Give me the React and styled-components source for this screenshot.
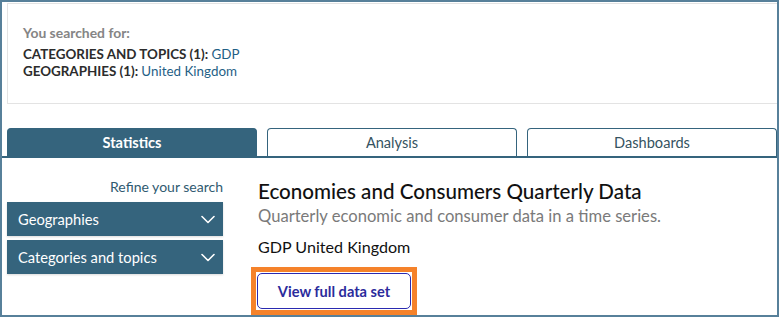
import React from 'react';
import styled, { createGlobalStyle } from 'styled-components';

const GlobalStyle = createGlobalStyle`
  html, body {
    margin: 0;
    padding: 0;
    background: #ffffff;
  }
  body {
    font-family: Lato, "Open Sans", Arial, sans-serif;
  }
  * {
    box-sizing: border-box;
  }
`;

const Frame = styled.div`
  width: 779px;
  height: 317px;
  border: 2px solid #57809a;
  overflow: hidden;
  background: #fff;
`;

const SearchPanel = styled.div`
  margin: 1px 0 0 5px;
  height: 101px;
  border: 1px solid #e3e3e3;
  border-right: none;
  padding: 20px 0 0 15px;
  font-size: 13.4px;
  line-height: 17px;
`;

const SearchLabel = styled.div`
  color: #858585;
  font-weight: 700;
  font-size: 13.9px;
  margin-bottom: 5px;
`;

const SearchLine = styled.div`
  color: #2c2c2c;
  font-weight: 700;
`;

const SearchValue = styled.span`
  color: #1f5f86;
  font-weight: 400;
`;

const TabRow = styled.div`
  display: flex;
  gap: 10px;
  margin-top: 24px;
  padding-left: 5px;
  border-bottom: 2px solid #35647d;
`;

const Tab = styled.div`
  width: 250px;
  height: 28px;
  display: flex;
  align-items: center;
  justify-content: center;
  border: 1.5px solid #35647d;
  border-bottom: none;
  border-radius: 4px 4px 0 0;
  font-size: 14.6px;
  font-weight: ${p => (p.$active ? 700 : 400)};
  color: ${p => (p.$active ? '#ffffff' : '#35535f')};
  background: ${p => (p.$active ? '#35647d' : '#ffffff')};
`;

const Body = styled.div`
  display: flex;
  gap: 35px;
  padding-left: 5px;
`;

const Sidebar = styled.div`
  width: 216px;
  display: flex;
  flex-direction: column;
  gap: 4px;
  padding-top: 20px;
`;

const Refine = styled.div`
  text-align: right;
  color: #2f5a70;
  font-size: 14px;
  line-height: 18px;
  margin-bottom: 2px;
`;

const Accordion = styled.div`
  height: 34px;
  background: #35647d;
  color: #fff;
  display: flex;
  align-items: center;
  justify-content: space-between;
  padding: 0 8px 0 11px;
  font-size: 14.7px;
  box-shadow: 0 1px 2px rgba(0, 0, 0, 0.15);
`;

const Main = styled.div`
  padding-top: 22px;
`;

const Title = styled.h2`
  margin: 0;
  font-size: 20.6px;
  line-height: 22px;
  font-weight: 500;
  color: #111;
`;

const Subtitle = styled.p`
  margin: 4px 0 0;
  font-size: 16.6px;
  line-height: 20px;
  color: #7a7a7a;
`;

const Dataset = styled.p`
  margin: 11px 0 0;
  font-size: 16.1px;
  line-height: 20px;
  color: #111;
`;

const Highlight = styled.div`
  display: inline-block;
  margin: 10px 0 0 -7px;
  border: 5px solid #f5822a;
  padding: 1px;
`;

const Button = styled.button`
  width: 154px;
  height: 36px;
  border: 1.5px solid #2a2ab0;
  border-radius: 5px;
  background: #fff;
  color: #2b2b9c;
  font-family: inherit;
  font-size: 14.6px;
  font-weight: 700;
  cursor: pointer;
`;

const Chevron = () => (
  <svg width="14" height="9" viewBox="0 0 14 9" fill="none">
    <path d="M1 1.5l6 6 6-6" stroke="#fff" strokeWidth="1.6" strokeLinecap="round" strokeLinejoin="round" />
  </svg>
);

export default function App() {
  return (
    <>
      <GlobalStyle />
      <Frame>
        <SearchPanel>
          <SearchLabel>You searched for:</SearchLabel>
          <SearchLine>
            CATEGORIES AND TOPICS (1): <SearchValue>GDP</SearchValue>
          </SearchLine>
          <SearchLine>
            GEOGRAPHIES (1): <SearchValue>United Kingdom</SearchValue>
          </SearchLine>
        </SearchPanel>
        <TabRow>
          <Tab $active>Statistics</Tab>
          <Tab>Analysis</Tab>
          <Tab>Dashboards</Tab>
        </TabRow>
        <Body>
          <Sidebar>
            <Refine>Refine your search</Refine>
            <Accordion>
              Geographies
              <Chevron />
            </Accordion>
            <Accordion>
              Categories and topics
              <Chevron />
            </Accordion>
          </Sidebar>
          <Main>
            <Title>Economies and Consumers Quarterly Data</Title>
            <Subtitle>Quarterly economic and consumer data in a time series.</Subtitle>
            <Dataset>GDP United Kingdom</Dataset>
            <Highlight>
              <Button>View full data set</Button>
            </Highlight>
          </Main>
        </Body>
      </Frame>
    </>
  );
}
